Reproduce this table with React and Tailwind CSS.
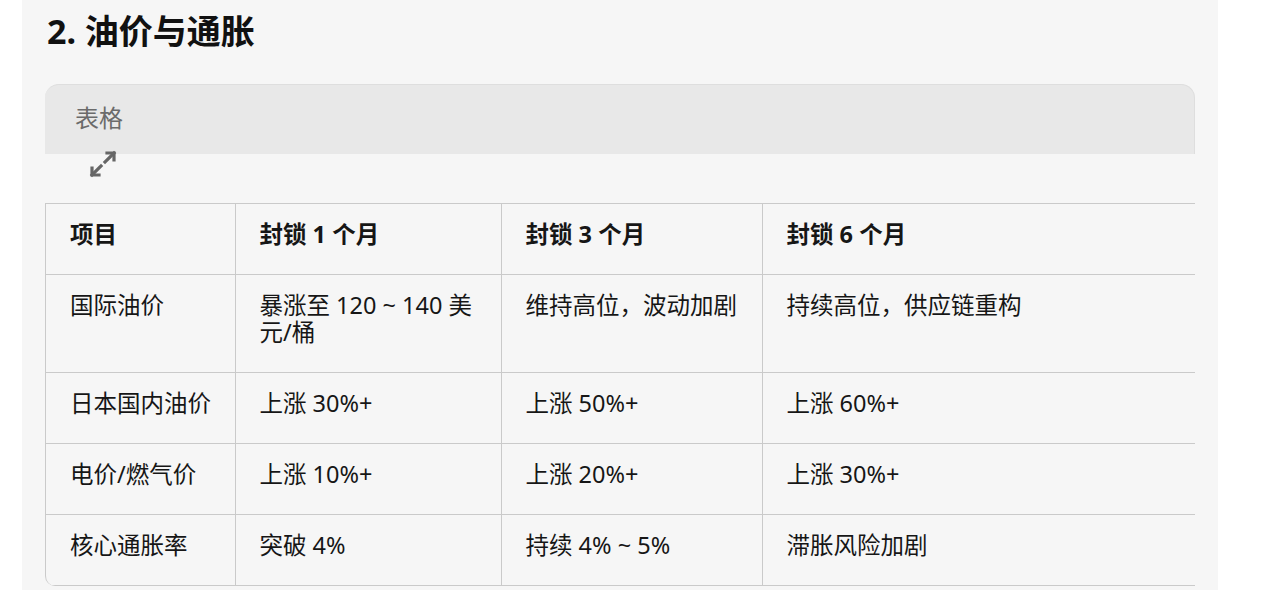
const font = { fontFamily: '"Noto Sans", "Noto Sans CJK SC", sans-serif' };

const head = ["项目", "封锁 1 个月", "封锁 3 个月", "封锁 6 个月"];

const rows = [
  ["国际油价", "暴涨至 120 ~ 140 美元/桶", "维持高位，波动加剧", "持续高位，供应链重构"],
  ["日本国内油价", "上涨 30%+", "上涨 50%+", "上涨 60%+"],
  ["电价/燃气价", "上涨 10%+", "上涨 20%+", "上涨 30%+"],
  ["核心通胀率", "突破 4%", "持续 4% ~ 5%", "滞胀风险加剧"],
];

function ExpandIcon() {
  return (
    <svg width="28" height="28" viewBox="0 0 28 28" fill="none" stroke="#666" strokeWidth="3.2" strokeLinecap="square" className="-mt-[4px] ml-[44px]">
      <polyline points="18,3 25,3 25,10" />
      <line x1="25" y1="3" x2="16" y2="12" />
      <polyline points="3,18 3,25 10,25" />
      <line x1="3" y1="25" x2="12" y2="16" />
    </svg>
  );
}

function Cell({ children, last, bold }) {
  return (
    <td
      className={
        "border-b border-[#cacaca] pl-[24px] pr-[12px] pt-[17px] pb-[26px] align-top text-[23.5px] leading-[27px] text-[#161616] " +
        (last ? "" : "border-r ") +
        (bold ? "font-bold" : "")
      }
    >
      {children}
    </td>
  );
}

export default function App() {
  return (
    <div className="h-[590px] w-[1280px] overflow-hidden bg-white" style={font}>
      <div className="ml-[22px] h-full w-[1196px] bg-[#f6f6f6] pl-[23px]">
        <h2 className="pl-[2px] pt-[11px] text-[34px] font-bold leading-[40px] text-[#111]">2. 油价与通胀</h2>

        <div className="mt-[33px] w-[1150px]">
          <div className="flex h-[70px] items-center rounded-t-[14px] border-t border-r border-[#dedede] bg-[#e8e8e8] pb-[3px] pl-[30px] text-[24px] text-[#6b6b6b]">
            表格
          </div>
          <div className="h-[53px]">
            <ExpandIcon />
          </div>
          <div className="overflow-hidden rounded-bl-[10px] border-l border-t border-[#cacaca]">
            <table className="w-full table-fixed border-collapse">
              <colgroup>
                <col className="w-[189px]" />
                <col className="w-[266px]" />
                <col className="w-[261px]" />
                <col />
              </colgroup>
              <thead>
                <tr>
                  {head.map((h, i) => (
                    <Cell key={h} bold last={i === 3}>
                      {h}
                    </Cell>
                  ))}
                </tr>
              </thead>
              <tbody>
                {rows.map((r) => (
                  <tr key={r[0]}>
                    {r.map((c, i) => (
                      <Cell key={i} last={i === 3}>
                        {c}
                      </Cell>
                    ))}
                  </tr>
                ))}
              </tbody>
            </table>
          </div>
        </div>
      </div>
    </div>
  );
}
